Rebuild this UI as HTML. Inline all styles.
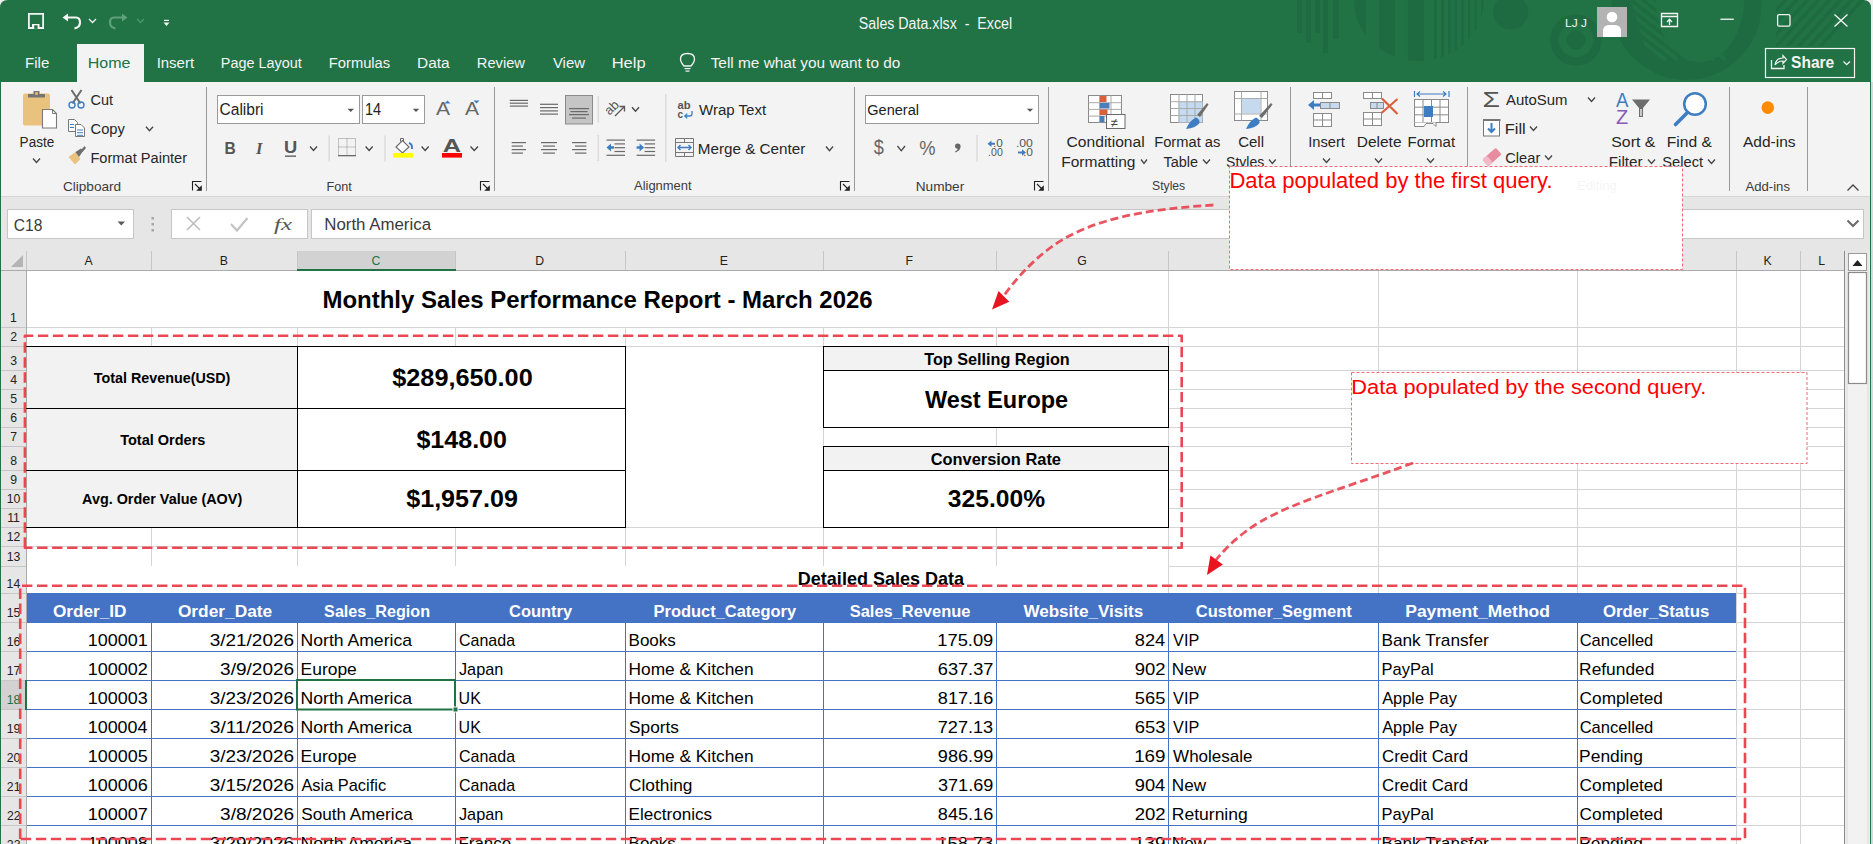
<!DOCTYPE html><html><head><meta charset="utf-8"><title>Sales Data.xlsx - Excel</title><style>html,body{margin:0;padding:0;width:1873px;height:844px;overflow:hidden;background:#dcdcdc;font-family:"Liberation Sans",sans-serif}</style></head><body><svg width="1873" height="844" viewBox="0 0 1873 844" font-family="Liberation Sans, sans-serif" style="display:block">
<rect x="0.00" y="0.00" width="1873.00" height="844.00" fill="#eeeeee" />
<rect x="1871.00" y="82.00" width="2.00" height="762.00" fill="#d8d8d8" />
<path d="M0 8 Q0 0 8 0 L1863 0 Q1871 0 1871 8 L1871 82 L0 82 Z" fill="#217346"/>
<rect x="0.00" y="82.00" width="1.00" height="762.00" fill="#217346" />
<rect x="1870.00" y="82.00" width="1.00" height="762.00" fill="#217346" />
<g fill="#1f6b41" opacity="0.9">
<rect x="1297.00" y="0.00" width="5.00" height="33.00" fill="#1f6b41" />
<rect x="1306.00" y="0.00" width="5.00" height="42.50" fill="#1f6b41" />
<rect x="1315.00" y="0.00" width="5.00" height="33.00" fill="#1f6b41" />
<rect x="1323.00" y="0.00" width="5.00" height="53.00" fill="#1f6b41" />
<rect x="1333.00" y="0.00" width="5.50" height="39.00" fill="#1f6b41" />
<clipPath id="hd"><path d="M1354 0 A65 61 0 0 0 1484 0 Z"/></clipPath>
<g clip-path="url(#hd)">
<rect x="1350.00" y="0.00" width="16.00" height="70.00" fill="#1f6b41" />
<rect x="1379.00" y="0.00" width="16.00" height="70.00" fill="#1f6b41" />
<rect x="1407.70" y="0.00" width="16.30" height="70.00" fill="#1f6b41" />
<rect x="1434.00" y="0.00" width="3.00" height="70.00" fill="#1f6b41" />
<rect x="1441.00" y="0.00" width="3.00" height="70.00" fill="#1f6b41" />
<rect x="1448.00" y="0.00" width="2.50" height="70.00" fill="#1f6b41" />
<rect x="1454.60" y="0.00" width="2.60" height="70.00" fill="#1f6b41" />
<rect x="1461.00" y="0.00" width="2.60" height="70.00" fill="#1f6b41" />
<rect x="1468.00" y="0.00" width="2.40" height="70.00" fill="#1f6b41" />
<rect x="1474.40" y="0.00" width="2.60" height="70.00" fill="#1f6b41" />
<rect x="1481.00" y="0.00" width="3.00" height="70.00" fill="#1f6b41" />
</g>
<circle cx="1510.7" cy="12" r="17.6" fill="#1f6b41"/>
<circle cx="1576" cy="40" r="21.5" fill="none" stroke="#1f6b41" stroke-width="8.5"/>
<circle cx="1576" cy="40" r="9.8" fill="#1f6b41"/>
<clipPath id="br"><circle cx="1686.5" cy="5" r="75"/></clipPath>
<circle cx="1686.5" cy="5" r="75" fill="#1f6b41"/>
<g clip-path="url(#br)">
<clipPath id="br2"><path d="M1629 -5 L1652 70 L1760 70 L1760 -5 Z"/></clipPath>
<g stroke="#217346" stroke-width="4" clip-path="url(#br2)">
<line x1="1576" y1="-10" x2="1666" y2="60"/>
<line x1="1588" y1="-10" x2="1678" y2="60"/>
<line x1="1600" y1="-10" x2="1690" y2="60"/>
<line x1="1612" y1="-10" x2="1702" y2="60"/>
<line x1="1624" y1="-10" x2="1714" y2="60"/>
<line x1="1636" y1="-10" x2="1726" y2="60"/>
</g>
<ellipse cx="1700" cy="0" rx="44" ry="62" fill="#217346"/>
</g>
<clipPath id="tr"><path d="M1776 0 L1871 0 L1871 46 L1776 46 Z"/></clipPath>
<g clip-path="url(#tr)" stroke="#1f6b41" stroke-width="3.5">
<line x1="1790" y1="-5" x2="1740" y2="50"/>
<line x1="1801" y1="-5" x2="1751" y2="50"/>
<line x1="1812" y1="-5" x2="1762" y2="50"/>
<line x1="1823" y1="-5" x2="1773" y2="50"/>
<line x1="1834" y1="-5" x2="1784" y2="50"/>
<line x1="1845" y1="-5" x2="1795" y2="50"/>
<line x1="1856" y1="-5" x2="1806" y2="50"/>
<line x1="1867" y1="-5" x2="1817" y2="50"/>
</g>
</g>
<g fill="none" stroke="#f4f4f4" stroke-width="1.8">
<path d="M28.9 13.9 H43.1 V28 H28.9 Z"/>
</g>
<rect x="32.00" y="24.00" width="7.50" height="4.80" fill="#f4f4f4" />
<rect x="34.20" y="25.30" width="3.40" height="3.50" fill="#217346" />
<path d="M67 17.5 L76 17.5 Q80 17.5 80 22.5 Q80 27.5 74.5 28.3" stroke="#f4f4f4" stroke-width="2.2" fill="none"/>
<path d="M62.5 17.5 L68 13.5 L68 21.5 Z" fill="#f4f4f4"/>
<path d="M89 19 L92.5 22.5 L96 19" stroke="#f4f4f4" stroke-width="1.3" fill="none"/>
<path d="M123 17.5 L114 17.5 Q110 17.5 110 22.5 Q110 27.5 115.5 28.3" stroke="#5fa07a" stroke-width="2.2" fill="none"/>
<path d="M127.5 17.5 L122 13.5 L122 21.5 Z" fill="#5fa07a"/>
<path d="M137 19 L140.5 22.5 L144 19" stroke="#4f9670" stroke-width="1.3" fill="none"/>
<rect x="164.00" y="19.80" width="5.00" height="1.20" fill="#f4f4f4" />
<path d="M163.5 22.5 L169.5 22.5 L166.5 26 Z" fill="#f4f4f4"/>
<text x="858.86" y="29.00" font-size="15.80" font-weight="normal" fill="#f4f4f4" textLength="153.18" lengthAdjust="spacingAndGlyphs" xml:space="preserve">Sales Data.xlsx  -  Excel</text>
<text x="1565.05" y="26.70" font-size="11.59" font-weight="normal" fill="#f4f4f4" textLength="21.83" lengthAdjust="spacingAndGlyphs" >LJ J</text>
<rect x="1597.00" y="7.00" width="30.00" height="30.00" fill="#b3b3b3" />
<circle cx="1612" cy="17" r="5.3" fill="#fff"/>
<path d="M1603 37 L1603 31 Q1603 25 1609 25 L1615 25 Q1621 25 1621 31 L1621 37 Z" fill="#fff"/>
<path d="M1661.5 13.5 H1677.5 V26.5 H1661.5 Z M1661.5 16.5 H1677.5" stroke="#f4f4f4" stroke-width="1.3" fill="none"/>
<path d="M1669.5 25 V19.5 M1667 22 L1669.5 19.3 L1672 22" stroke="#f4f4f4" stroke-width="1.3" fill="none"/>
<rect x="1720.40" y="18.60" width="13.40" height="1.30" fill="#f4f4f4" />
<rect x="1777.6" y="14.6" width="12.4" height="11.6" rx="1.5" stroke="#f4f4f4" stroke-width="1.3" fill="none"/>
<path d="M1834.5 14.5 L1847.5 26.5 M1847.5 14.5 L1834.5 26.5" stroke="#f4f4f4" stroke-width="1.4" fill="none"/>
<rect x="1765.5" y="48.5" width="89" height="29" stroke="#f4f4f4" stroke-width="1.2" fill="none"/>
<path d="M1771.5 60 V68.5 H1784 V65" stroke="#f4f4f4" stroke-width="1.3" fill="none"/>
<path d="M1775 65 Q1776 58 1783 58 V55.5 L1786.5 59.5 L1783 63.5 V61 Q1778 61 1775 65 Z" stroke="#f4f4f4" stroke-width="1.2" fill="none"/>
<text x="1791.03" y="68.40" font-size="16.23" font-weight="bold" fill="#f4f4f4" textLength="43.20" lengthAdjust="spacingAndGlyphs" >Share</text>
<path d="M1843.5 61.5 L1846.7 64.7 L1849.9 61.5" stroke="#f4f4f4" stroke-width="1.3" fill="none"/>
<rect x="77.00" y="44.00" width="67.00" height="38.00" fill="#f3f3f3" />
<text x="25.10" y="68.00" font-size="14.93" font-weight="normal" fill="#f4f4f4" textLength="24.20" lengthAdjust="spacingAndGlyphs" >File</text>
<text x="87.72" y="68.00" font-size="14.93" font-weight="normal" fill="#217346" textLength="42.74" lengthAdjust="spacingAndGlyphs" >Home</text>
<text x="156.65" y="68.00" font-size="14.93" font-weight="normal" fill="#f4f4f4" textLength="37.44" lengthAdjust="spacingAndGlyphs" >Insert</text>
<text x="220.85" y="68.00" font-size="14.93" font-weight="normal" fill="#f4f4f4" textLength="80.84" lengthAdjust="spacingAndGlyphs" >Page Layout</text>
<text x="328.82" y="68.00" font-size="14.93" font-weight="normal" fill="#f4f4f4" textLength="61.36" lengthAdjust="spacingAndGlyphs" >Formulas</text>
<text x="417.07" y="68.00" font-size="14.93" font-weight="normal" fill="#f4f4f4" textLength="32.57" lengthAdjust="spacingAndGlyphs" >Data</text>
<text x="476.82" y="68.00" font-size="14.93" font-weight="normal" fill="#f4f4f4" textLength="48.16" lengthAdjust="spacingAndGlyphs" >Review</text>
<text x="552.93" y="68.00" font-size="14.93" font-weight="normal" fill="#f4f4f4" textLength="32.07" lengthAdjust="spacingAndGlyphs" >View</text>
<text x="611.68" y="68.00" font-size="14.93" font-weight="normal" fill="#f4f4f4" textLength="34.01" lengthAdjust="spacingAndGlyphs" >Help</text>
<text x="710.69" y="68.00" font-size="14.93" font-weight="normal" fill="#f4f4f4" textLength="189.62" lengthAdjust="spacingAndGlyphs" >Tell me what you want to do</text>
<path d="M684 66 Q680.5 62 680.5 59 Q680.5 53.5 687.5 53.5 Q694.5 53.5 694.5 59 Q694.5 62 691 66 Z" stroke="#f4f4f4" stroke-width="1.3" fill="none"/>
<rect x="684.50" y="68.00" width="6.00" height="1.20" fill="#f4f4f4" />
<rect x="685.50" y="70.50" width="4.00" height="1.20" fill="#f4f4f4" />
<rect x="1.00" y="197.00" width="1869.00" height="54.00" fill="#e6e6e6" />
<rect x="1.00" y="196.00" width="1869.00" height="1.00" fill="#d5d5d5" />
<rect x="7.50" y="209.50" width="126.00" height="29.00" fill="#ffffff" stroke="#c6c6c6" stroke-width="1"/>
<text x="13.72" y="230.50" font-size="15.65" font-weight="normal" fill="#3a3a3a" textLength="28.60" lengthAdjust="spacingAndGlyphs" >C18</text>
<path d="M117.5 221.5 L125 221.5 L121.25 225.5 Z" fill="#5a5a5a"/>
<rect x="151.50" y="217.00" width="2.50" height="2.50" fill="#a6a6a6" />
<rect x="151.50" y="223.00" width="2.50" height="2.50" fill="#a6a6a6" />
<rect x="151.50" y="229.00" width="2.50" height="2.50" fill="#a6a6a6" />
<rect x="171.50" y="209.50" width="136.00" height="29.00" fill="#ffffff" stroke="#c6c6c6" stroke-width="1"/>
<path d="M187 217 L200 230 M200 217 L187 230" stroke="#bdbdbd" stroke-width="1.6" fill="none"/>
<path d="M231 224 L237 230.5 L247.5 218" stroke="#c4c4c4" stroke-width="2.2" fill="none"/>
<text x="274" y="230" font-family="Liberation Serif" font-style="italic" font-size="17" fill="#555" textLength="18" lengthAdjust="spacingAndGlyphs">fx</text>
<rect x="311.50" y="209.50" width="1552.00" height="29.00" fill="#ffffff" stroke="#c6c6c6" stroke-width="1"/>
<text x="324.25" y="230.30" font-size="15.94" font-weight="normal" fill="#3a3a3a" textLength="106.76" lengthAdjust="spacingAndGlyphs" >North America</text>
<path d="M1847.5 220.5 L1853 226 L1858.5 220.5" stroke="#6a6a6a" stroke-width="2" fill="none"/>
<rect x="1.00" y="251.00" width="1843.00" height="19.00" fill="#e6e6e6" />
<rect x="297.00" y="251.00" width="158.00" height="19.00" fill="#d2d2d2" />
<rect x="1.00" y="270.00" width="1843.00" height="1.00" fill="#ababab" />
<rect x="151.00" y="251.00" width="1.00" height="19.00" fill="#c6c6c6" />
<rect x="297.00" y="251.00" width="1.00" height="19.00" fill="#c6c6c6" />
<rect x="455.00" y="251.00" width="1.00" height="19.00" fill="#c6c6c6" />
<rect x="625.00" y="251.00" width="1.00" height="19.00" fill="#c6c6c6" />
<rect x="823.00" y="251.00" width="1.00" height="19.00" fill="#c6c6c6" />
<rect x="996.00" y="251.00" width="1.00" height="19.00" fill="#c6c6c6" />
<rect x="1168.00" y="251.00" width="1.00" height="19.00" fill="#c6c6c6" />
<rect x="1378.00" y="251.00" width="1.00" height="19.00" fill="#c6c6c6" />
<rect x="1577.00" y="251.00" width="1.00" height="19.00" fill="#c6c6c6" />
<rect x="1736.00" y="251.00" width="1.00" height="19.00" fill="#c6c6c6" />
<rect x="1800.00" y="251.00" width="1.00" height="19.00" fill="#c6c6c6" />
<rect x="26.00" y="251.00" width="1.00" height="19.00" fill="#c6c6c6" />
<rect x="297.00" y="269.00" width="159.00" height="2.00" fill="#217346" />
<path d="M11 267 L23 267 L23 255 Z" fill="#b4b4b4"/>
<text x="84.42" y="265.20" font-size="13.33" font-weight="normal" fill="#222" textLength="8.18" lengthAdjust="spacingAndGlyphs" >A</text>
<text x="219.74" y="265.20" font-size="13.33" font-weight="normal" fill="#222" textLength="8.18" lengthAdjust="spacingAndGlyphs" >B</text>
<text x="371.49" y="265.20" font-size="13.33" font-weight="normal" fill="#217346" textLength="8.86" lengthAdjust="spacingAndGlyphs" >C</text>
<text x="535.37" y="265.20" font-size="13.33" font-weight="normal" fill="#222" textLength="8.86" lengthAdjust="spacingAndGlyphs" >D</text>
<text x="719.68" y="265.20" font-size="13.33" font-weight="normal" fill="#222" textLength="8.18" lengthAdjust="spacingAndGlyphs" >E</text>
<text x="905.51" y="265.20" font-size="13.33" font-weight="normal" fill="#222" textLength="7.49" lengthAdjust="spacingAndGlyphs" >F</text>
<text x="1077.37" y="265.20" font-size="13.33" font-weight="normal" fill="#222" textLength="9.54" lengthAdjust="spacingAndGlyphs" >G</text>
<text x="1268.58" y="265.20" font-size="13.33" font-weight="normal" fill="#222" textLength="8.86" lengthAdjust="spacingAndGlyphs" >H</text>
<text x="1475.81" y="265.20" font-size="13.33" font-weight="normal" fill="#222" textLength="3.41" lengthAdjust="spacingAndGlyphs" >I</text>
<text x="1653.80" y="265.20" font-size="13.33" font-weight="normal" fill="#222" textLength="6.13" lengthAdjust="spacingAndGlyphs" >J</text>
<text x="1763.49" y="265.20" font-size="13.33" font-weight="normal" fill="#222" textLength="8.18" lengthAdjust="spacingAndGlyphs" >K</text>
<text x="1818.29" y="265.20" font-size="13.33" font-weight="normal" fill="#222" textLength="6.82" lengthAdjust="spacingAndGlyphs" >L</text>
<rect x="1.00" y="271.00" width="25.00" height="573.00" fill="#e6e6e6" />
<rect x="26.00" y="270.00" width="1.00" height="574.00" fill="#ababab" />
<rect x="1.00" y="327.00" width="25.00" height="1.00" fill="#c6c6c6" />
<rect x="1.00" y="346.00" width="25.00" height="1.00" fill="#c6c6c6" />
<rect x="1.00" y="370.00" width="25.00" height="1.00" fill="#c6c6c6" />
<rect x="1.00" y="389.00" width="25.00" height="1.00" fill="#c6c6c6" />
<rect x="1.00" y="408.00" width="25.00" height="1.00" fill="#c6c6c6" />
<rect x="1.00" y="427.00" width="25.00" height="1.00" fill="#c6c6c6" />
<rect x="1.00" y="446.00" width="25.00" height="1.00" fill="#c6c6c6" />
<rect x="1.00" y="470.00" width="25.00" height="1.00" fill="#c6c6c6" />
<rect x="1.00" y="489.00" width="25.00" height="1.00" fill="#c6c6c6" />
<rect x="1.00" y="508.00" width="25.00" height="1.00" fill="#c6c6c6" />
<rect x="1.00" y="527.00" width="25.00" height="1.00" fill="#c6c6c6" />
<rect x="1.00" y="546.00" width="25.00" height="1.00" fill="#c6c6c6" />
<rect x="1.00" y="566.00" width="25.00" height="1.00" fill="#c6c6c6" />
<rect x="1.00" y="593.00" width="25.00" height="1.00" fill="#c6c6c6" />
<rect x="1.00" y="622.00" width="25.00" height="1.00" fill="#c6c6c6" />
<rect x="1.00" y="651.00" width="25.00" height="1.00" fill="#c6c6c6" />
<rect x="1.00" y="680.00" width="25.00" height="1.00" fill="#c6c6c6" />
<rect x="1.00" y="681.00" width="25.00" height="28.00" fill="#d2d2d2" />
<rect x="1.00" y="709.00" width="25.00" height="1.00" fill="#c6c6c6" />
<rect x="1.00" y="738.00" width="25.00" height="1.00" fill="#c6c6c6" />
<rect x="1.00" y="767.00" width="25.00" height="1.00" fill="#c6c6c6" />
<rect x="1.00" y="796.00" width="25.00" height="1.00" fill="#c6c6c6" />
<rect x="1.00" y="825.00" width="25.00" height="1.00" fill="#c6c6c6" />
<rect x="1.00" y="854.00" width="25.00" height="1.00" fill="#c6c6c6" />
<rect x="27.00" y="271.00" width="1817.00" height="573.00" fill="#ffffff" />
<rect x="1844.00" y="251.00" width="1.00" height="593.00" fill="#8a8a8a" />
<rect x="1845.00" y="251.00" width="25.00" height="593.00" fill="#e6e6e6" />
<rect x="1848.00" y="271.00" width="19.00" height="573.00" fill="#f2f2f2" />
<rect x="1869.00" y="251.00" width="1.00" height="593.00" fill="#f0eef0" />
<rect x="1845.00" y="251.00" width="1.00" height="593.00" fill="#ececec" />
<rect x="1848.50" y="253.50" width="18.00" height="17.00" fill="#ffffff" stroke="#9a9a9a" stroke-width="1"/>
<path d="M1852.5 266 L1862.5 266 L1857.5 260 Z" fill="#222"/>
<rect x="1848.50" y="272.50" width="18.00" height="111.00" fill="#ffffff" stroke="#8a8a8a" stroke-width="1.2"/>
<rect x="27.00" y="327.00" width="1817.00" height="1.00" fill="#d4d4d4" />
<rect x="27.00" y="346.00" width="1817.00" height="1.00" fill="#d4d4d4" />
<rect x="27.00" y="370.00" width="1817.00" height="1.00" fill="#d4d4d4" />
<rect x="27.00" y="389.00" width="1817.00" height="1.00" fill="#d4d4d4" />
<rect x="27.00" y="408.00" width="1817.00" height="1.00" fill="#d4d4d4" />
<rect x="27.00" y="427.00" width="1817.00" height="1.00" fill="#d4d4d4" />
<rect x="27.00" y="446.00" width="1817.00" height="1.00" fill="#d4d4d4" />
<rect x="27.00" y="470.00" width="1817.00" height="1.00" fill="#d4d4d4" />
<rect x="27.00" y="489.00" width="1817.00" height="1.00" fill="#d4d4d4" />
<rect x="27.00" y="508.00" width="1817.00" height="1.00" fill="#d4d4d4" />
<rect x="27.00" y="527.00" width="1817.00" height="1.00" fill="#d4d4d4" />
<rect x="27.00" y="546.00" width="1817.00" height="1.00" fill="#d4d4d4" />
<rect x="27.00" y="566.00" width="1817.00" height="1.00" fill="#d4d4d4" />
<rect x="27.00" y="593.00" width="1817.00" height="1.00" fill="#d4d4d4" />
<rect x="27.00" y="622.00" width="1817.00" height="1.00" fill="#d4d4d4" />
<rect x="27.00" y="651.00" width="1817.00" height="1.00" fill="#d4d4d4" />
<rect x="27.00" y="680.00" width="1817.00" height="1.00" fill="#d4d4d4" />
<rect x="27.00" y="709.00" width="1817.00" height="1.00" fill="#d4d4d4" />
<rect x="27.00" y="738.00" width="1817.00" height="1.00" fill="#d4d4d4" />
<rect x="27.00" y="767.00" width="1817.00" height="1.00" fill="#d4d4d4" />
<rect x="27.00" y="796.00" width="1817.00" height="1.00" fill="#d4d4d4" />
<rect x="27.00" y="825.00" width="1817.00" height="1.00" fill="#d4d4d4" />
<rect x="27.00" y="854.00" width="1817.00" height="1.00" fill="#d4d4d4" />
<rect x="151.00" y="271.00" width="1.00" height="573.00" fill="#d4d4d4" />
<rect x="297.00" y="271.00" width="1.00" height="573.00" fill="#d4d4d4" />
<rect x="455.00" y="271.00" width="1.00" height="573.00" fill="#d4d4d4" />
<rect x="625.00" y="271.00" width="1.00" height="573.00" fill="#d4d4d4" />
<rect x="823.00" y="271.00" width="1.00" height="573.00" fill="#d4d4d4" />
<rect x="996.00" y="271.00" width="1.00" height="573.00" fill="#d4d4d4" />
<rect x="1168.00" y="271.00" width="1.00" height="573.00" fill="#d4d4d4" />
<rect x="1378.00" y="271.00" width="1.00" height="573.00" fill="#d4d4d4" />
<rect x="1577.00" y="271.00" width="1.00" height="573.00" fill="#d4d4d4" />
<rect x="1736.00" y="271.00" width="1.00" height="573.00" fill="#d4d4d4" />
<rect x="1800.00" y="271.00" width="1.00" height="573.00" fill="#d4d4d4" />
<rect x="27.00" y="271.00" width="1141.00" height="56.00" fill="#ffffff" />
<text x="322.44" y="307.80" font-size="24.64" font-weight="bold" fill="#000" textLength="550.25" lengthAdjust="spacingAndGlyphs" >Monthly Sales Performance Report - March 2026</text>
<text x="10.11" y="322.40" font-size="13.33" font-weight="normal" fill="#222" textLength="6.82" lengthAdjust="spacingAndGlyphs" >1</text>
<text x="10.30" y="341.40" font-size="13.33" font-weight="normal" fill="#222" textLength="6.82" lengthAdjust="spacingAndGlyphs" >2</text>
<text x="10.30" y="365.40" font-size="13.33" font-weight="normal" fill="#222" textLength="6.82" lengthAdjust="spacingAndGlyphs" >3</text>
<text x="10.36" y="384.40" font-size="13.33" font-weight="normal" fill="#222" textLength="6.82" lengthAdjust="spacingAndGlyphs" >4</text>
<text x="10.30" y="403.40" font-size="13.33" font-weight="normal" fill="#222" textLength="6.82" lengthAdjust="spacingAndGlyphs" >5</text>
<text x="10.23" y="422.40" font-size="13.33" font-weight="normal" fill="#222" textLength="6.82" lengthAdjust="spacingAndGlyphs" >6</text>
<text x="10.30" y="441.40" font-size="13.33" font-weight="normal" fill="#222" textLength="6.82" lengthAdjust="spacingAndGlyphs" >7</text>
<text x="10.27" y="465.40" font-size="13.33" font-weight="normal" fill="#222" textLength="6.82" lengthAdjust="spacingAndGlyphs" >8</text>
<text x="10.30" y="484.40" font-size="13.33" font-weight="normal" fill="#222" textLength="6.82" lengthAdjust="spacingAndGlyphs" >9</text>
<text x="6.65" y="503.40" font-size="13.33" font-weight="normal" fill="#222" textLength="13.64" lengthAdjust="spacingAndGlyphs" >10</text>
<text x="7.17" y="522.40" font-size="13.33" font-weight="normal" fill="#222" textLength="12.73" lengthAdjust="spacingAndGlyphs" >11</text>
<text x="6.74" y="541.40" font-size="13.33" font-weight="normal" fill="#222" textLength="13.64" lengthAdjust="spacingAndGlyphs" >12</text>
<text x="6.68" y="561.40" font-size="13.33" font-weight="normal" fill="#222" textLength="13.64" lengthAdjust="spacingAndGlyphs" >13</text>
<text x="6.62" y="588.40" font-size="13.33" font-weight="normal" fill="#222" textLength="13.64" lengthAdjust="spacingAndGlyphs" >14</text>
<text x="6.68" y="617.40" font-size="13.33" font-weight="normal" fill="#222" textLength="13.64" lengthAdjust="spacingAndGlyphs" >15</text>
<text x="6.68" y="646.40" font-size="13.33" font-weight="normal" fill="#222" textLength="13.64" lengthAdjust="spacingAndGlyphs" >16</text>
<text x="6.74" y="675.40" font-size="13.33" font-weight="normal" fill="#222" textLength="13.64" lengthAdjust="spacingAndGlyphs" >17</text>
<text x="6.68" y="704.40" font-size="13.33" font-weight="normal" fill="#217346" textLength="13.64" lengthAdjust="spacingAndGlyphs" >18</text>
<text x="6.71" y="733.40" font-size="13.33" font-weight="normal" fill="#222" textLength="13.64" lengthAdjust="spacingAndGlyphs" >19</text>
<text x="6.80" y="762.40" font-size="13.33" font-weight="normal" fill="#222" textLength="13.64" lengthAdjust="spacingAndGlyphs" >20</text>
<text x="6.86" y="791.40" font-size="13.33" font-weight="normal" fill="#222" textLength="13.64" lengthAdjust="spacingAndGlyphs" >21</text>
<text x="6.89" y="820.40" font-size="13.33" font-weight="normal" fill="#222" textLength="13.64" lengthAdjust="spacingAndGlyphs" >22</text>
<text x="6.83" y="849.40" font-size="13.33" font-weight="normal" fill="#222" textLength="13.64" lengthAdjust="spacingAndGlyphs" >23</text>
<rect x="27.00" y="346.00" width="270.00" height="181.00" fill="#f2f2f2" />
<rect x="298.00" y="347.00" width="327.00" height="180.00" fill="#ffffff" />
<rect x="26.00" y="346.00" width="600.00" height="1.00" fill="#000" />
<rect x="26.00" y="408.00" width="600.00" height="1.00" fill="#000" />
<rect x="26.00" y="470.00" width="600.00" height="1.00" fill="#000" />
<rect x="26.00" y="527.00" width="600.00" height="1.00" fill="#000" />
<rect x="297.00" y="346.00" width="1.00" height="182.00" fill="#000" />
<rect x="625.00" y="346.00" width="1.00" height="182.00" fill="#000" />
<text x="93.86" y="382.90" font-size="14.78" font-weight="bold" fill="#000" textLength="136.54" lengthAdjust="spacingAndGlyphs" >Total Revenue(USD)</text>
<text x="120.15" y="444.90" font-size="14.64" font-weight="bold" fill="#000" textLength="85.25" lengthAdjust="spacingAndGlyphs" >Total Orders</text>
<text x="82.04" y="503.90" font-size="14.78" font-weight="bold" fill="#000" textLength="160.14" lengthAdjust="spacingAndGlyphs" >Avg. Order Value (AOV)</text>
<text x="392.22" y="386.20" font-size="23.91" font-weight="bold" fill="#000" textLength="140.52" lengthAdjust="spacingAndGlyphs" >$289,650.00</text>
<text x="416.42" y="447.80" font-size="23.91" font-weight="bold" fill="#000" textLength="90.57" lengthAdjust="spacingAndGlyphs" >$148.00</text>
<text x="406.22" y="507.00" font-size="23.91" font-weight="bold" fill="#000" textLength="111.63" lengthAdjust="spacingAndGlyphs" >$1,957.09</text>
<rect x="824.00" y="346.00" width="344.00" height="81.00" fill="#ffffff" />
<rect x="824.00" y="346.00" width="344.00" height="24.00" fill="#f2f2f2" />
<rect x="823.00" y="346.00" width="346.00" height="1.00" fill="#000" />
<rect x="823.00" y="370.00" width="346.00" height="1.00" fill="#000" />
<rect x="823.00" y="427.00" width="346.00" height="1.00" fill="#000" />
<rect x="823.00" y="346.00" width="1.00" height="82.00" fill="#000" />
<rect x="1168.00" y="346.00" width="1.00" height="82.00" fill="#000" />
<rect x="824.00" y="446.00" width="344.00" height="81.00" fill="#ffffff" />
<rect x="824.00" y="446.00" width="344.00" height="24.00" fill="#f2f2f2" />
<rect x="823.00" y="446.00" width="346.00" height="1.00" fill="#000" />
<rect x="823.00" y="470.00" width="346.00" height="1.00" fill="#000" />
<rect x="823.00" y="527.00" width="346.00" height="1.00" fill="#000" />
<rect x="823.00" y="446.00" width="1.00" height="82.00" fill="#000" />
<rect x="1168.00" y="446.00" width="1.00" height="82.00" fill="#000" />
<text x="924.24" y="364.80" font-size="17.25" font-weight="bold" fill="#000" textLength="145.45" lengthAdjust="spacingAndGlyphs" >Top Selling Region</text>
<text x="924.90" y="407.60" font-size="24.06" font-weight="bold" fill="#000" textLength="143.30" lengthAdjust="spacingAndGlyphs" >West Europe</text>
<text x="930.64" y="464.80" font-size="17.25" font-weight="bold" fill="#000" textLength="130.35" lengthAdjust="spacingAndGlyphs" >Conversion Rate</text>
<text x="947.88" y="507.00" font-size="24.06" font-weight="bold" fill="#000" textLength="97.18" lengthAdjust="spacingAndGlyphs" >325.00%</text>
<rect x="626.00" y="347.00" width="197.00" height="180.00" fill="#ffffff" />
<rect x="824.00" y="428.00" width="344.00" height="18.00" fill="#ffffff" />
<rect x="996.00" y="428.00" width="1.00" height="18.00" fill="#d4d4d4" />
<rect x="27.00" y="566.00" width="1141.00" height="27.00" fill="#ffffff" />
<text x="797.83" y="585.40" font-size="17.97" font-weight="bold" fill="#000" textLength="166.22" lengthAdjust="spacingAndGlyphs" >Detailed Sales Data</text>
<rect x="27.00" y="593.00" width="1709.00" height="30.00" fill="#4472c4" />
<text x="52.91" y="616.80" font-size="15.94" font-weight="bold" fill="#ffffff" textLength="73.55" lengthAdjust="spacingAndGlyphs" >Order_ID</text>
<text x="177.91" y="616.80" font-size="15.94" font-weight="bold" fill="#ffffff" textLength="94.23" lengthAdjust="spacingAndGlyphs" >Order_Date</text>
<text x="324.12" y="616.80" font-size="15.94" font-weight="bold" fill="#ffffff" textLength="105.91" lengthAdjust="spacingAndGlyphs" >Sales_Region</text>
<text x="509.04" y="616.80" font-size="15.94" font-weight="bold" fill="#ffffff" textLength="63.09" lengthAdjust="spacingAndGlyphs" >Country</text>
<text x="653.63" y="616.80" font-size="15.94" font-weight="bold" fill="#ffffff" textLength="142.43" lengthAdjust="spacingAndGlyphs" >Product_Category</text>
<text x="849.71" y="616.80" font-size="15.94" font-weight="bold" fill="#ffffff" textLength="120.72" lengthAdjust="spacingAndGlyphs" >Sales_Revenue</text>
<text x="1023.40" y="616.80" font-size="15.94" font-weight="bold" fill="#ffffff" textLength="119.82" lengthAdjust="spacingAndGlyphs" >Website_Visits</text>
<text x="1195.84" y="616.80" font-size="15.94" font-weight="bold" fill="#ffffff" textLength="155.96" lengthAdjust="spacingAndGlyphs" >Customer_Segment</text>
<text x="1405.26" y="616.80" font-size="15.94" font-weight="bold" fill="#ffffff" textLength="144.66" lengthAdjust="spacingAndGlyphs" >Payment_Method</text>
<text x="1602.93" y="616.80" font-size="15.94" font-weight="bold" fill="#ffffff" textLength="106.35" lengthAdjust="spacingAndGlyphs" >Order_Status</text>
<rect x="27.00" y="623.00" width="1709.00" height="28.00" fill="#ffffff" />
<rect x="27.00" y="652.00" width="1709.00" height="28.00" fill="#ffffff" />
<rect x="27.00" y="681.00" width="1709.00" height="28.00" fill="#ffffff" />
<rect x="27.00" y="710.00" width="1709.00" height="28.00" fill="#ffffff" />
<rect x="27.00" y="739.00" width="1709.00" height="28.00" fill="#ffffff" />
<rect x="27.00" y="768.00" width="1709.00" height="28.00" fill="#ffffff" />
<rect x="27.00" y="797.00" width="1709.00" height="28.00" fill="#ffffff" />
<rect x="27.00" y="826.00" width="1709.00" height="28.00" fill="#ffffff" />
<rect x="27.00" y="651.00" width="1709.00" height="1.00" fill="#4472c4" />
<rect x="27.00" y="680.00" width="1709.00" height="1.00" fill="#4472c4" />
<rect x="27.00" y="709.00" width="1709.00" height="1.00" fill="#4472c4" />
<rect x="27.00" y="738.00" width="1709.00" height="1.00" fill="#4472c4" />
<rect x="27.00" y="767.00" width="1709.00" height="1.00" fill="#4472c4" />
<rect x="27.00" y="796.00" width="1709.00" height="1.00" fill="#4472c4" />
<rect x="27.00" y="825.00" width="1709.00" height="1.00" fill="#4472c4" />
<rect x="27.00" y="854.00" width="1709.00" height="1.00" fill="#4472c4" />
<rect x="151.00" y="623.00" width="1.00" height="221.00" fill="#4472c4" />
<rect x="297.00" y="623.00" width="1.00" height="221.00" fill="#4472c4" />
<rect x="455.00" y="623.00" width="1.00" height="221.00" fill="#4472c4" />
<rect x="625.00" y="623.00" width="1.00" height="221.00" fill="#4472c4" />
<rect x="823.00" y="623.00" width="1.00" height="221.00" fill="#4472c4" />
<rect x="996.00" y="623.00" width="1.00" height="221.00" fill="#4472c4" />
<rect x="1168.00" y="623.00" width="1.00" height="221.00" fill="#4472c4" />
<rect x="1378.00" y="623.00" width="1.00" height="221.00" fill="#4472c4" />
<rect x="1577.00" y="623.00" width="1.00" height="221.00" fill="#4472c4" />
<text x="87.75" y="645.80" font-size="16.81" font-weight="normal" fill="#000" textLength="59.99" lengthAdjust="spacingAndGlyphs" >100001</text>
<text x="209.74" y="645.80" font-size="16.81" font-weight="normal" fill="#000" textLength="84.29" lengthAdjust="spacingAndGlyphs" >3/21/2026</text>
<text x="937.33" y="645.80" font-size="16.81" font-weight="normal" fill="#000" textLength="55.97" lengthAdjust="spacingAndGlyphs" >175.09</text>
<text x="1134.78" y="645.80" font-size="16.81" font-weight="normal" fill="#000" textLength="30.43" lengthAdjust="spacingAndGlyphs" >824</text>
<text x="300.59" y="645.80" font-size="16.81" font-weight="normal" fill="#000" textLength="111.42" lengthAdjust="spacingAndGlyphs" >North America</text>
<text x="459.00" y="645.80" font-size="16.81" font-weight="normal" fill="#000" textLength="56.05" lengthAdjust="spacingAndGlyphs" >Canada</text>
<text x="628.54" y="645.80" font-size="16.81" font-weight="normal" fill="#000" textLength="47.35" lengthAdjust="spacingAndGlyphs" >Books</text>
<text x="1173.12" y="645.80" font-size="16.81" font-weight="normal" fill="#000" textLength="26.12" lengthAdjust="spacingAndGlyphs" >VIP</text>
<text x="1381.42" y="645.80" font-size="16.81" font-weight="normal" fill="#000" textLength="107.33" lengthAdjust="spacingAndGlyphs" >Bank Transfer</text>
<text x="1579.67" y="645.80" font-size="16.81" font-weight="normal" fill="#000" textLength="73.64" lengthAdjust="spacingAndGlyphs" >Cancelled</text>
<text x="87.75" y="674.80" font-size="16.81" font-weight="normal" fill="#000" textLength="60.09" lengthAdjust="spacingAndGlyphs" >100002</text>
<text x="220.14" y="674.80" font-size="16.81" font-weight="normal" fill="#000" textLength="73.97" lengthAdjust="spacingAndGlyphs" >3/9/2026</text>
<text x="937.79" y="674.80" font-size="16.81" font-weight="normal" fill="#000" textLength="55.59" lengthAdjust="spacingAndGlyphs" >637.37</text>
<text x="1134.77" y="674.80" font-size="16.81" font-weight="normal" fill="#000" textLength="30.82" lengthAdjust="spacingAndGlyphs" >902</text>
<text x="300.61" y="674.80" font-size="16.81" font-weight="normal" fill="#000" textLength="56.17" lengthAdjust="spacingAndGlyphs" >Europe</text>
<text x="458.96" y="674.80" font-size="16.81" font-weight="normal" fill="#000" textLength="44.30" lengthAdjust="spacingAndGlyphs" >Japan</text>
<text x="628.52" y="674.80" font-size="16.81" font-weight="normal" fill="#000" textLength="125.02" lengthAdjust="spacingAndGlyphs" >Home &amp; Kitchen</text>
<text x="1171.83" y="674.80" font-size="16.81" font-weight="normal" fill="#000" textLength="34.30" lengthAdjust="spacingAndGlyphs" >New</text>
<text x="1381.48" y="674.80" font-size="16.81" font-weight="normal" fill="#000" textLength="52.25" lengthAdjust="spacingAndGlyphs" >PayPal</text>
<text x="1579.11" y="674.80" font-size="16.81" font-weight="normal" fill="#000" textLength="75.25" lengthAdjust="spacingAndGlyphs" >Refunded</text>
<text x="87.75" y="703.80" font-size="16.81" font-weight="normal" fill="#000" textLength="59.90" lengthAdjust="spacingAndGlyphs" >100003</text>
<text x="209.74" y="703.80" font-size="16.81" font-weight="normal" fill="#000" textLength="84.29" lengthAdjust="spacingAndGlyphs" >3/23/2026</text>
<text x="937.89" y="703.80" font-size="16.81" font-weight="normal" fill="#000" textLength="55.31" lengthAdjust="spacingAndGlyphs" >817.16</text>
<text x="1134.87" y="703.80" font-size="16.81" font-weight="normal" fill="#000" textLength="30.53" lengthAdjust="spacingAndGlyphs" >565</text>
<text x="300.59" y="703.80" font-size="16.81" font-weight="normal" fill="#000" textLength="111.42" lengthAdjust="spacingAndGlyphs" >North America</text>
<text x="458.60" y="703.80" font-size="16.81" font-weight="normal" fill="#000" textLength="22.23" lengthAdjust="spacingAndGlyphs" >UK</text>
<text x="628.52" y="703.80" font-size="16.81" font-weight="normal" fill="#000" textLength="125.02" lengthAdjust="spacingAndGlyphs" >Home &amp; Kitchen</text>
<text x="1173.12" y="703.80" font-size="16.81" font-weight="normal" fill="#000" textLength="26.12" lengthAdjust="spacingAndGlyphs" >VIP</text>
<text x="1382.20" y="703.80" font-size="16.81" font-weight="normal" fill="#000" textLength="74.68" lengthAdjust="spacingAndGlyphs" >Apple Pay</text>
<text x="1579.64" y="703.80" font-size="16.81" font-weight="normal" fill="#000" textLength="83.30" lengthAdjust="spacingAndGlyphs" >Completed</text>
<text x="87.76" y="732.80" font-size="16.81" font-weight="normal" fill="#000" textLength="59.72" lengthAdjust="spacingAndGlyphs" >100004</text>
<text x="209.73" y="732.80" font-size="16.81" font-weight="normal" fill="#000" textLength="84.33" lengthAdjust="spacingAndGlyphs" >3/11/2026</text>
<text x="937.79" y="732.80" font-size="16.81" font-weight="normal" fill="#000" textLength="55.41" lengthAdjust="spacingAndGlyphs" >727.13</text>
<text x="1134.68" y="732.80" font-size="16.81" font-weight="normal" fill="#000" textLength="30.72" lengthAdjust="spacingAndGlyphs" >653</text>
<text x="300.59" y="732.80" font-size="16.81" font-weight="normal" fill="#000" textLength="111.42" lengthAdjust="spacingAndGlyphs" >North America</text>
<text x="458.60" y="732.80" font-size="16.81" font-weight="normal" fill="#000" textLength="22.23" lengthAdjust="spacingAndGlyphs" >UK</text>
<text x="629.12" y="732.80" font-size="16.81" font-weight="normal" fill="#000" textLength="49.88" lengthAdjust="spacingAndGlyphs" >Sports</text>
<text x="1173.12" y="732.80" font-size="16.81" font-weight="normal" fill="#000" textLength="26.12" lengthAdjust="spacingAndGlyphs" >VIP</text>
<text x="1382.20" y="732.80" font-size="16.81" font-weight="normal" fill="#000" textLength="74.68" lengthAdjust="spacingAndGlyphs" >Apple Pay</text>
<text x="1579.67" y="732.80" font-size="16.81" font-weight="normal" fill="#000" textLength="73.64" lengthAdjust="spacingAndGlyphs" >Cancelled</text>
<text x="87.75" y="761.80" font-size="16.81" font-weight="normal" fill="#000" textLength="59.90" lengthAdjust="spacingAndGlyphs" >100005</text>
<text x="209.74" y="761.80" font-size="16.81" font-weight="normal" fill="#000" textLength="84.29" lengthAdjust="spacingAndGlyphs" >3/23/2026</text>
<text x="937.88" y="761.80" font-size="16.81" font-weight="normal" fill="#000" textLength="55.41" lengthAdjust="spacingAndGlyphs" >986.99</text>
<text x="1134.19" y="761.80" font-size="16.81" font-weight="normal" fill="#000" textLength="31.32" lengthAdjust="spacingAndGlyphs" >169</text>
<text x="300.61" y="761.80" font-size="16.81" font-weight="normal" fill="#000" textLength="56.17" lengthAdjust="spacingAndGlyphs" >Europe</text>
<text x="459.00" y="761.80" font-size="16.81" font-weight="normal" fill="#000" textLength="56.05" lengthAdjust="spacingAndGlyphs" >Canada</text>
<text x="628.52" y="761.80" font-size="16.81" font-weight="normal" fill="#000" textLength="125.02" lengthAdjust="spacingAndGlyphs" >Home &amp; Kitchen</text>
<text x="1173.11" y="761.80" font-size="16.81" font-weight="normal" fill="#000" textLength="79.43" lengthAdjust="spacingAndGlyphs" >Wholesale</text>
<text x="1381.96" y="761.80" font-size="16.81" font-weight="normal" fill="#000" textLength="86.29" lengthAdjust="spacingAndGlyphs" >Credit Card</text>
<text x="1579.11" y="761.80" font-size="16.81" font-weight="normal" fill="#000" textLength="63.82" lengthAdjust="spacingAndGlyphs" >Pending</text>
<text x="87.75" y="790.80" font-size="16.81" font-weight="normal" fill="#000" textLength="59.90" lengthAdjust="spacingAndGlyphs" >100006</text>
<text x="209.74" y="790.80" font-size="16.81" font-weight="normal" fill="#000" textLength="84.29" lengthAdjust="spacingAndGlyphs" >3/15/2026</text>
<text x="937.98" y="790.80" font-size="16.81" font-weight="normal" fill="#000" textLength="55.31" lengthAdjust="spacingAndGlyphs" >371.69</text>
<text x="1134.78" y="790.80" font-size="16.81" font-weight="normal" fill="#000" textLength="30.43" lengthAdjust="spacingAndGlyphs" >904</text>
<text x="301.40" y="790.80" font-size="16.81" font-weight="normal" fill="#000" textLength="84.69" lengthAdjust="spacingAndGlyphs" >Asia Pacific</text>
<text x="459.00" y="790.80" font-size="16.81" font-weight="normal" fill="#000" textLength="56.05" lengthAdjust="spacingAndGlyphs" >Canada</text>
<text x="629.04" y="790.80" font-size="16.81" font-weight="normal" fill="#000" textLength="63.47" lengthAdjust="spacingAndGlyphs" >Clothing</text>
<text x="1171.83" y="790.80" font-size="16.81" font-weight="normal" fill="#000" textLength="34.30" lengthAdjust="spacingAndGlyphs" >New</text>
<text x="1381.96" y="790.80" font-size="16.81" font-weight="normal" fill="#000" textLength="86.29" lengthAdjust="spacingAndGlyphs" >Credit Card</text>
<text x="1579.64" y="790.80" font-size="16.81" font-weight="normal" fill="#000" textLength="83.30" lengthAdjust="spacingAndGlyphs" >Completed</text>
<text x="87.75" y="819.80" font-size="16.81" font-weight="normal" fill="#000" textLength="60.09" lengthAdjust="spacingAndGlyphs" >100007</text>
<text x="220.14" y="819.80" font-size="16.81" font-weight="normal" fill="#000" textLength="73.97" lengthAdjust="spacingAndGlyphs" >3/8/2026</text>
<text x="937.89" y="819.80" font-size="16.81" font-weight="normal" fill="#000" textLength="55.31" lengthAdjust="spacingAndGlyphs" >845.16</text>
<text x="1134.67" y="819.80" font-size="16.81" font-weight="normal" fill="#000" textLength="30.92" lengthAdjust="spacingAndGlyphs" >202</text>
<text x="301.23" y="819.80" font-size="16.81" font-weight="normal" fill="#000" textLength="111.55" lengthAdjust="spacingAndGlyphs" >South America</text>
<text x="458.96" y="819.80" font-size="16.81" font-weight="normal" fill="#000" textLength="44.30" lengthAdjust="spacingAndGlyphs" >Japan</text>
<text x="628.53" y="819.80" font-size="16.81" font-weight="normal" fill="#000" textLength="83.48" lengthAdjust="spacingAndGlyphs" >Electronics</text>
<text x="1171.80" y="819.80" font-size="16.81" font-weight="normal" fill="#000" textLength="75.96" lengthAdjust="spacingAndGlyphs" >Returning</text>
<text x="1381.48" y="819.80" font-size="16.81" font-weight="normal" fill="#000" textLength="52.25" lengthAdjust="spacingAndGlyphs" >PayPal</text>
<text x="1579.64" y="819.80" font-size="16.81" font-weight="normal" fill="#000" textLength="83.30" lengthAdjust="spacingAndGlyphs" >Completed</text>
<text x="87.75" y="848.80" font-size="16.81" font-weight="normal" fill="#000" textLength="59.90" lengthAdjust="spacingAndGlyphs" >100008</text>
<text x="209.74" y="848.80" font-size="16.81" font-weight="normal" fill="#000" textLength="84.29" lengthAdjust="spacingAndGlyphs" >3/29/2026</text>
<text x="937.33" y="848.80" font-size="16.81" font-weight="normal" fill="#000" textLength="55.88" lengthAdjust="spacingAndGlyphs" >158.73</text>
<text x="1134.19" y="848.80" font-size="16.81" font-weight="normal" fill="#000" textLength="31.32" lengthAdjust="spacingAndGlyphs" >139</text>
<text x="300.59" y="848.80" font-size="16.81" font-weight="normal" fill="#000" textLength="111.42" lengthAdjust="spacingAndGlyphs" >North America</text>
<text x="458.44" y="848.80" font-size="16.81" font-weight="normal" fill="#000" textLength="52.76" lengthAdjust="spacingAndGlyphs" >France</text>
<text x="628.54" y="848.80" font-size="16.81" font-weight="normal" fill="#000" textLength="47.35" lengthAdjust="spacingAndGlyphs" >Books</text>
<text x="1171.83" y="848.80" font-size="16.81" font-weight="normal" fill="#000" textLength="34.30" lengthAdjust="spacingAndGlyphs" >New</text>
<text x="1381.42" y="848.80" font-size="16.81" font-weight="normal" fill="#000" textLength="107.33" lengthAdjust="spacingAndGlyphs" >Bank Transfer</text>
<text x="1579.11" y="848.80" font-size="16.81" font-weight="normal" fill="#000" textLength="63.82" lengthAdjust="spacingAndGlyphs" >Pending</text>
<rect x="297" y="680" width="158" height="29.5" fill="none" stroke="#217346" stroke-width="2"/>
<rect x="453.00" y="707.00" width="5.00" height="5.00" fill="#217346" stroke="#ffffff" stroke-width="1"/>
<rect x="25.00" y="680.00" width="2.00" height="30.00" fill="#217346" />
<rect x="1.00" y="82.00" width="1869.00" height="114.00" fill="#f3f3f3" />
<rect x="23" y="93.5" width="27" height="32" rx="2" fill="#e9c27d"/>
<path d="M28 97.5 V94 H33.5 V91 H39.5 V94 H45 V97.5 Z" fill="#757575"/>
<rect x="35.20" y="92.20" width="2.60" height="2.60" fill="#e9c27d" />
<path d="M42.5 109.5 H52.5 L56.5 113.5 V128 H42.5 Z" fill="#fff" stroke="#7a7a7a" stroke-width="1.1"/>
<path d="M52.5 109.5 V113.5 H56.5" fill="none" stroke="#7a7a7a" stroke-width="1"/>
<text x="19.62" y="146.70" font-size="15.07" font-weight="normal" fill="#262626" textLength="34.62" lengthAdjust="spacingAndGlyphs" >Paste</text>
<path d="M33 158.5 L36.5 162.5 L40 158.5" stroke="#444" stroke-width="1.3" fill="none"/>
<path d="M71.5 90 L80.5 103.5 M81.5 90 L72.5 103.5" stroke="#6b6b6b" stroke-width="2" fill="none"/>
<circle cx="72" cy="105" r="3" fill="none" stroke="#3f7dc2" stroke-width="1.4"/>
<circle cx="81" cy="105" r="3" fill="none" stroke="#3f7dc2" stroke-width="1.4"/>
<text x="90.58" y="105.00" font-size="15.51" font-weight="normal" fill="#262626" textLength="22.51" lengthAdjust="spacingAndGlyphs" >Cut</text>
<path d="M68.5 119.5 H74.5 L77.5 122.5 V131.5 H68.5 Z" fill="#fff" stroke="#777" stroke-width="1"/>
<path d="M75.5 124.5 H81 L84.5 128 V136.5 H75.5 Z" fill="#fff" stroke="#777" stroke-width="1"/>
<rect x="70.00" y="124.00" width="4.00" height="1.00" fill="#3f7dc2" />
<rect x="70.00" y="127.00" width="4.00" height="1.00" fill="#3f7dc2" />
<rect x="77.00" y="129.50" width="6.00" height="1.00" fill="#3f7dc2" />
<rect x="77.00" y="132.20" width="6.00" height="1.00" fill="#3f7dc2" />
<rect x="77.00" y="134.80" width="6.00" height="1.00" fill="#3f7dc2" />
<text x="90.56" y="133.70" font-size="15.51" font-weight="normal" fill="#262626" textLength="34.33" lengthAdjust="spacingAndGlyphs" >Copy</text>
<path d="M146 126.8 L149.5 130.8 L153 126.8" stroke="#444" stroke-width="1.3" fill="none"/>
<path d="M68.5 157 L75.5 152 L80.5 159 L75 164.5 Z" fill="#e9c27d"/>
<path d="M75.5 152 L81 148.5 L83 151 L79 157 Z" fill="#6d6d6d"/>
<path d="M81 150 L84.5 146 L86 148 L82.5 152 Z" fill="#6d6d6d"/>
<text x="90.43" y="162.80" font-size="15.51" font-weight="normal" fill="#262626" textLength="96.64" lengthAdjust="spacingAndGlyphs" >Format Painter</text>
<text x="62.92" y="190.80" font-size="13.04" font-weight="normal" fill="#3b3b3b" textLength="58.27" lengthAdjust="spacingAndGlyphs" >Clipboard</text>
<path d="M192.5 190.5 V181.5 H201.5" stroke="#222" stroke-width="1.1" fill="none"/>
<path d="M195 184 L201 190" stroke="#222" stroke-width="1.1" fill="none"/>
<path d="M201.8 185.2 V190.8 H196.2 Z" fill="#222"/>
<rect x="206.00" y="87.00" width="1.00" height="104.00" fill="#9a9a9a" />
<rect x="217.50" y="95.50" width="142.00" height="28.00" fill="#fff" stroke="#9a9a9a" stroke-width="1"/>
<text x="219.52" y="115.00" font-size="15.94" font-weight="normal" fill="#222" textLength="44.05" lengthAdjust="spacingAndGlyphs" >Calibri</text>
<path d="M347.5 108.8 L354 108.8 L350.75 112 Z" fill="#555"/>
<rect x="362.50" y="95.50" width="62.00" height="28.00" fill="#fff" stroke="#9a9a9a" stroke-width="1"/>
<text x="364.91" y="115.00" font-size="15.94" font-weight="normal" fill="#222" textLength="16.16" lengthAdjust="spacingAndGlyphs" >14</text>
<path d="M412.8 108.8 L419.3 108.8 L416 112 Z" fill="#555"/>
<text x="436.00" y="115.00" font-size="18.84" font-weight="normal" fill="#666" textLength="14.04" lengthAdjust="spacingAndGlyphs" >A</text>
<path d="M444.5 103.5 L447.5 100.5 L450.5 103.5 Z" fill="#3f7dc2"/>
<text x="465.00" y="115.00" font-size="18.84" font-weight="normal" fill="#666" textLength="14.04" lengthAdjust="spacingAndGlyphs" >A</text>
<path d="M473.5 100.5 L479.5 100.5 L476.5 103.5 Z" fill="#3f7dc2"/>
<text x="224.49" y="153.70" font-size="16.67" font-weight="bold" fill="#555" textLength="11.25" lengthAdjust="spacingAndGlyphs" >B</text>
<text x="256" y="153.7" font-family="Liberation Serif" font-style="italic" font-weight="bold" font-size="16.5" fill="#555">I</text>
<text x="283.90" y="153.00" font-size="15.94" font-weight="bold" fill="#555" textLength="13.24" lengthAdjust="spacingAndGlyphs" >U</text>
<rect x="285.00" y="155.50" width="11.00" height="1.30" fill="#555" />
<path d="M310 146.5 L313.5 150.5 L317 146.5" stroke="#444" stroke-width="1.3" fill="none"/>
<rect x="328.60" y="135.50" width="1.00" height="26.00" fill="#d0d0d0" />
<path d="M338.5 138.5 H355.5 V155.5 H338.5 Z M347 138.5 V155.5 M338.5 147 H355.5" stroke="#8a8a8a" stroke-width="1" stroke-dasharray="1 1" fill="none"/>
<rect x="338.00" y="155.00" width="18.00" height="1.30" fill="#6a6a6a" />
<path d="M365.6 146.5 L369.15 150.5 L372.7 146.5" stroke="#444" stroke-width="1.3" fill="none"/>
<rect x="384.50" y="135.50" width="1.00" height="26.00" fill="#d0d0d0" />
<path d="M396 147 L402.5 140.5 L409 147 L402.5 153 Z" fill="#fff" stroke="#6a6a6a" stroke-width="1.1"/>
<path d="M400.5 141.5 V138.5 H403.5 V141" fill="none" stroke="#6a6a6a" stroke-width="1"/>
<path d="M409 143 Q412.5 144 412 149" stroke="#3f7dc2" stroke-width="2" fill="none"/>
<rect x="393.00" y="153.00" width="20.00" height="4.60" fill="#ffff00" />
<path d="M421.6 146.5 L425.15 150.5 L428.7 146.5" stroke="#444" stroke-width="1.3" fill="none"/>
<text x="442.87" y="151.50" font-size="18.12" font-weight="bold" fill="#555" textLength="18.32" lengthAdjust="spacingAndGlyphs" >A</text>
<rect x="442.00" y="153.00" width="20.00" height="4.60" fill="#ff0000" />
<path d="M470.5 146.5 L474.25 150.5 L478 146.5" stroke="#444" stroke-width="1.3" fill="none"/>
<text x="326.48" y="190.70" font-size="13.04" font-weight="normal" fill="#3b3b3b" textLength="25.39" lengthAdjust="spacingAndGlyphs" >Font</text>
<path d="M480.5 190.5 V181.5 H489.5" stroke="#222" stroke-width="1.1" fill="none"/>
<path d="M483 184 L489 190" stroke="#222" stroke-width="1.1" fill="none"/>
<path d="M489.8 185.2 V190.8 H484.2 Z" fill="#222"/>
<rect x="494.00" y="87.00" width="1.00" height="104.00" fill="#9a9a9a" />
<rect x="509.80" y="99.80" width="18.20" height="1.20" fill="#6a6a6a" />
<rect x="509.80" y="102.60" width="18.20" height="1.20" fill="#6a6a6a" />
<rect x="509.80" y="105.50" width="18.20" height="1.20" fill="#6a6a6a" />
<rect x="540.00" y="103.70" width="18.00" height="1.20" fill="#6a6a6a" />
<rect x="540.00" y="107.00" width="18.00" height="1.20" fill="#6a6a6a" />
<rect x="540.00" y="110.30" width="18.00" height="1.20" fill="#6a6a6a" />
<rect x="540.00" y="113.50" width="18.00" height="1.20" fill="#6a6a6a" />
<rect x="565.50" y="95.50" width="27.00" height="28.50" fill="#c5c5c5" stroke="#8a8a8a" stroke-width="1"/>
<rect x="569.00" y="108.00" width="20.00" height="1.20" fill="#6a6a6a" />
<rect x="570.50" y="111.00" width="17.00" height="1.20" fill="#6a6a6a" />
<rect x="569.00" y="114.00" width="20.00" height="1.20" fill="#6a6a6a" />
<rect x="572.00" y="117.50" width="14.00" height="1.20" fill="#6a6a6a" />
<rect x="511.70" y="142.00" width="14.30" height="1.20" fill="#6a6a6a" />
<rect x="511.70" y="145.50" width="11.30" height="1.20" fill="#6a6a6a" />
<rect x="511.70" y="149.00" width="14.30" height="1.20" fill="#6a6a6a" />
<rect x="511.70" y="152.50" width="11.30" height="1.20" fill="#6a6a6a" />
<rect x="541.00" y="142.00" width="16.00" height="1.20" fill="#6a6a6a" />
<rect x="543.00" y="145.50" width="12.00" height="1.20" fill="#6a6a6a" />
<rect x="541.00" y="149.00" width="16.00" height="1.20" fill="#6a6a6a" />
<rect x="543.00" y="152.50" width="12.00" height="1.20" fill="#6a6a6a" />
<rect x="572.00" y="142.00" width="14.40" height="1.20" fill="#6a6a6a" />
<rect x="575.00" y="145.50" width="11.40" height="1.20" fill="#6a6a6a" />
<rect x="572.00" y="149.00" width="14.40" height="1.20" fill="#6a6a6a" />
<rect x="575.00" y="152.50" width="11.40" height="1.20" fill="#6a6a6a" />
<rect x="597.70" y="96.00" width="1.00" height="26.50" fill="#d0d0d0" />
<rect x="597.70" y="135.00" width="1.00" height="26.00" fill="#d0d0d0" />
<text x="0" y="0" font-size="13" fill="#5a5a5a" text-anchor="middle" transform="translate(614.7 110.7) rotate(-45)">ab</text>
<path d="M615 116 L624.5 106.5 M619.5 106.5 H624.5 V111.5" stroke="#5a5a5a" stroke-width="1.3" fill="none"/>
<path d="M632 107.2 L635.5 111.2 L639 107.2" stroke="#444" stroke-width="1.3" fill="none"/>
<rect x="606.50" y="139.50" width="18.50" height="1.20" fill="#6a6a6a" />
<rect x="614.50" y="143.30" width="10.50" height="1.20" fill="#6a6a6a" />
<rect x="614.50" y="147.10" width="10.50" height="1.20" fill="#6a6a6a" />
<rect x="614.50" y="150.90" width="10.50" height="1.20" fill="#6a6a6a" />
<rect x="606.50" y="154.70" width="18.50" height="1.20" fill="#6a6a6a" />
<path d="M606.5 147.5 L611.0 143.5 V146.3 H614.0 V148.7 H611.0 V151.5 Z" fill="#3f7dc2"/>
<rect x="636.60" y="139.50" width="18.50" height="1.20" fill="#6a6a6a" />
<rect x="644.60" y="143.30" width="10.50" height="1.20" fill="#6a6a6a" />
<rect x="644.60" y="147.10" width="10.50" height="1.20" fill="#6a6a6a" />
<rect x="644.60" y="150.90" width="10.50" height="1.20" fill="#6a6a6a" />
<rect x="636.60" y="154.70" width="18.50" height="1.20" fill="#6a6a6a" />
<path d="M644.1 147.5 L639.6 143.5 V146.3 H636.6 V148.7 H639.6 V151.5 Z" fill="#3f7dc2"/>
<rect x="665.40" y="94.00" width="1.00" height="68.00" fill="#d0d0d0" />
<text x="677.5" y="109" font-size="10" fill="#555" font-weight="bold" textLength="13" lengthAdjust="spacingAndGlyphs">ab</text>
<text x="677.5" y="117.5" font-size="10" fill="#555" font-weight="bold">c</text>
<path d="M692 111 V114 Q692 116 689.5 116 H685 M687.3 113.6 L684.8 116 L687.3 118.4" stroke="#3f7dc2" stroke-width="1.3" fill="none"/>
<text x="699.02" y="115.00" font-size="15.51" font-weight="normal" fill="#262626" textLength="67.12" lengthAdjust="spacingAndGlyphs" >Wrap Text</text>
<path d="M675.5 138.5 H693.5 V156.5 H675.5 Z M675.5 142.5 H693.5 M675.5 152.5 H693.5 M684.5 138.5 V142.5 M684.5 152.5 V156.5" stroke="#777" stroke-width="1" fill="none"/>
<path d="M678 147.5 H691 M680.5 145 L678 147.5 L680.5 150 M688.5 145 L691 147.5 L688.5 150" stroke="#3f7dc2" stroke-width="1.4" fill="none"/>
<text x="697.78" y="153.90" font-size="15.51" font-weight="normal" fill="#262626" textLength="107.51" lengthAdjust="spacingAndGlyphs" >Merge &amp; Center</text>
<path d="M826 146.5 L829.5 150.7 L833 146.5" stroke="#444" stroke-width="1.3" fill="none"/>
<text x="634.00" y="190.30" font-size="13.04" font-weight="normal" fill="#3b3b3b" textLength="57.59" lengthAdjust="spacingAndGlyphs" >Alignment</text>
<path d="M840.5 190.5 V181.5 H849.5" stroke="#222" stroke-width="1.1" fill="none"/>
<path d="M843 184 L849 190" stroke="#222" stroke-width="1.1" fill="none"/>
<path d="M849.8 185.2 V190.8 H844.2 Z" fill="#222"/>
<rect x="854.00" y="87.00" width="1.00" height="104.00" fill="#9a9a9a" />
<rect x="865.50" y="95.50" width="173.00" height="28.00" fill="#fff" stroke="#9a9a9a" stroke-width="1"/>
<text x="867.27" y="114.90" font-size="15.22" font-weight="normal" fill="#222" textLength="51.71" lengthAdjust="spacingAndGlyphs" >General</text>
<path d="M1026.8 108.8 L1033.2 108.8 L1030 111.8 Z" fill="#555"/>
<text x="873.82" y="154.00" font-size="20.29" font-weight="normal" fill="#666" textLength="10.07" lengthAdjust="spacingAndGlyphs" >$</text>
<path d="M897.5 146 L901.25 150.8 L905 146" stroke="#444" stroke-width="1.3" fill="none"/>
<text x="919.36" y="154.70" font-size="19.57" font-weight="normal" fill="#666" textLength="16.26" lengthAdjust="spacingAndGlyphs" >%</text>
<path d="M957.6 143.6 Q960.6 143.6 960.6 146.6 Q960.6 150.5 955.5 152.6 L955 151.6 Q957.6 150.2 957.8 148.8 Q955 148.6 955 146.2 Q955 143.6 957.6 143.6 Z" fill="#666"/>
<rect x="976.50" y="135.00" width="1.00" height="26.70" fill="#d0d0d0" />
<text x="992.94" y="147.00" font-size="10.14" font-weight="normal" fill="#555" textLength="9.87" lengthAdjust="spacingAndGlyphs" >.0</text>
<text x="988.05" y="156.00" font-size="10.14" font-weight="normal" fill="#555" textLength="14.73" lengthAdjust="spacingAndGlyphs" >.00</text>
<path d="M987.5 143.8 L991.5 140.5 V142.8 H995 V144.8 H991.5 V147 Z" fill="#3f7dc2"/>
<text x="1015.90" y="147.00" font-size="10.14" font-weight="normal" fill="#555" textLength="17.03" lengthAdjust="spacingAndGlyphs" >.00</text>
<text x="1022.92" y="156.00" font-size="10.14" font-weight="normal" fill="#555" textLength="9.98" lengthAdjust="spacingAndGlyphs" >.0</text>
<path d="M1026 152.5 L1022 149.2 V151.5 H1018 V153.5 H1022 V155.8 Z" fill="#3f7dc2"/>
<text x="915.71" y="190.80" font-size="13.04" font-weight="normal" fill="#3b3b3b" textLength="48.52" lengthAdjust="spacingAndGlyphs" >Number</text>
<path d="M1034.5 190.5 V181.5 H1043.5" stroke="#222" stroke-width="1.1" fill="none"/>
<path d="M1037 184 L1043 190" stroke="#222" stroke-width="1.1" fill="none"/>
<path d="M1043.8 185.2 V190.8 H1038.2 Z" fill="#222"/>
<rect x="1048.00" y="87.00" width="1.00" height="104.00" fill="#9a9a9a" />
<g stroke="#8a8a8a" stroke-width="1" fill="#fff">
<rect x="1088.5" y="95.5" width="33" height="27"/>
</g>
<rect x="1088.50" y="102.20" width="33.00" height="1.00" fill="#aaa" />
<rect x="1088.50" y="108.90" width="33.00" height="1.00" fill="#aaa" />
<rect x="1088.50" y="115.60" width="33.00" height="1.00" fill="#aaa" />
<rect x="1099.50" y="95.50" width="1.00" height="27.00" fill="#aaa" />
<rect x="1110.50" y="95.50" width="1.00" height="27.00" fill="#aaa" />
<rect x="1099.50" y="96.00" width="7.00" height="6.00" fill="#d9603b" />
<rect x="1099.50" y="103.00" width="10.00" height="5.50" fill="#4a7ebb" />
<rect x="1099.50" y="109.50" width="8.00" height="5.50" fill="#d9603b" />
<rect x="1099.50" y="116.00" width="5.00" height="6.00" fill="#4a7ebb" />
<rect x="1106.5" y="114.5" width="18.5" height="14" fill="#fff" stroke="#6a6a6a" stroke-width="1"/>
<text x="1110.5" y="126.5" font-size="13" fill="#444">≠</text>
<text x="1066.62" y="146.70" font-size="15.51" font-weight="normal" fill="#262626" textLength="78.05" lengthAdjust="spacingAndGlyphs" >Conditional</text>
<text x="1061.26" y="166.60" font-size="15.51" font-weight="normal" fill="#262626" textLength="74.24" lengthAdjust="spacingAndGlyphs" >Formatting</text>
<path d="M1141 159.5 L1144.0 163.5 L1147 159.5" stroke="#444" stroke-width="1.3" fill="none"/>
<rect x="1170.5" y="94.5" width="32" height="28" fill="#fff" stroke="#8a8a8a" stroke-width="1"/>
<rect x="1178.50" y="101.50" width="24.00" height="21.00" fill="#c5d9ef" />
<rect x="1170.50" y="101.20" width="32.00" height="1.00" fill="#aaa" />
<rect x="1170.50" y="108.00" width="32.00" height="1.00" fill="#aaa" />
<rect x="1170.50" y="115.00" width="32.00" height="1.00" fill="#aaa" />
<rect x="1178.50" y="94.50" width="1.00" height="28.00" fill="#aaa" />
<rect x="1186.50" y="94.50" width="1.00" height="28.00" fill="#aaa" />
<rect x="1194.50" y="94.50" width="1.00" height="28.00" fill="#aaa" />
<path d="M1197 115 L1207 103 L1208.5 104.5 L1200 117 Z" fill="#6d6d6d"/>
<path d="M1186 129 Q1190 120 1196 117.5 Q1200 119 1199.5 123 Q1196 128 1186 129 Z" fill="#3f7dc2"/>
<text x="1154.23" y="146.70" font-size="15.51" font-weight="normal" fill="#262626" textLength="66.11" lengthAdjust="spacingAndGlyphs" >Format as</text>
<text x="1163.51" y="166.60" font-size="15.51" font-weight="normal" fill="#262626" textLength="34.55" lengthAdjust="spacingAndGlyphs" >Table</text>
<path d="M1203 159.5 L1206.5 163.5 L1210 159.5" stroke="#444" stroke-width="1.3" fill="none"/>
<rect x="1234.5" y="91.5" width="33" height="29" fill="#fff" stroke="#8a8a8a" stroke-width="1"/>
<rect x="1241.50" y="98.50" width="19.00" height="15.00" fill="#c5d9ef" />
<rect x="1234.50" y="98.00" width="33.00" height="1.00" fill="#aaa" />
<rect x="1234.50" y="113.50" width="33.00" height="1.00" fill="#aaa" />
<rect x="1241.00" y="91.50" width="1.00" height="29.00" fill="#aaa" />
<rect x="1260.50" y="91.50" width="1.00" height="29.00" fill="#aaa" />
<path d="M1259 116 L1271 103 L1272.5 104.5 L1262 118 Z" fill="#6d6d6d"/>
<path d="M1246 129 Q1250 120 1256 117.5 Q1260 119 1259.5 123 Q1256 128 1246 129 Z" fill="#3f7dc2"/>
<text x="1238.25" y="146.70" font-size="15.51" font-weight="normal" fill="#262626" textLength="25.76" lengthAdjust="spacingAndGlyphs" >Cell</text>
<text x="1226.07" y="166.60" font-size="15.51" font-weight="normal" fill="#262626" textLength="38.20" lengthAdjust="spacingAndGlyphs" >Styles</text>
<path d="M1269 159.5 L1272.35 163.5 L1275.7 159.5" stroke="#444" stroke-width="1.3" fill="none"/>
<text x="1152.05" y="190.40" font-size="13.04" font-weight="normal" fill="#3b3b3b" textLength="33.15" lengthAdjust="spacingAndGlyphs" >Styles</text>
<rect x="1290.00" y="87.00" width="1.00" height="104.00" fill="#9a9a9a" />
<rect x="1313.5" y="92.5" width="18" height="6" fill="#fff" stroke="#8a8a8a" stroke-width="1"/>
<rect x="1322.00" y="92.50" width="1.00" height="6.00" fill="#8a8a8a" />
<rect x="1320.5" y="102.5" width="19" height="6" fill="#c5d9ef" stroke="#8a8a8a" stroke-width="1"/>
<rect x="1329.50" y="102.50" width="1.00" height="6.00" fill="#8a8a8a" />
<rect x="1313.5" y="113.5" width="18" height="13" fill="#fff" stroke="#8a8a8a" stroke-width="1"/>
<rect x="1322.00" y="113.50" width="1.00" height="13.00" fill="#8a8a8a" />
<rect x="1313.50" y="119.50" width="18.00" height="1.00" fill="#8a8a8a" />
<path d="M1308 105 L1314 100 V103.5 H1320 V106.5 H1314 V110 Z" fill="#3f7dc2"/>
<text x="1308.18" y="146.70" font-size="15.51" font-weight="normal" fill="#262626" textLength="36.71" lengthAdjust="spacingAndGlyphs" >Insert</text>
<path d="M1323 158.5 L1326.5 162.5 L1330 158.5" stroke="#444" stroke-width="1.3" fill="none"/>
<rect x="1363.5" y="92.5" width="18" height="6" fill="#fff" stroke="#8a8a8a" stroke-width="1"/>
<rect x="1372.00" y="92.50" width="1.00" height="6.00" fill="#8a8a8a" />
<rect x="1370.5" y="102.5" width="13" height="6" fill="#c5d9ef" stroke="#8a8a8a" stroke-width="1"/>
<rect x="1376.50" y="102.50" width="1.00" height="6.00" fill="#8a8a8a" />
<rect x="1363.5" y="112.5" width="18" height="13" fill="#fff" stroke="#8a8a8a" stroke-width="1"/>
<rect x="1372.00" y="112.50" width="1.00" height="13.00" fill="#8a8a8a" />
<rect x="1363.50" y="118.50" width="18.00" height="1.00" fill="#8a8a8a" />
<path d="M1382 98.5 L1397.5 114 M1397.5 99 L1381.5 113" stroke="#d9603b" stroke-width="2.2" fill="none"/>
<text x="1356.76" y="146.70" font-size="15.51" font-weight="normal" fill="#262626" textLength="44.75" lengthAdjust="spacingAndGlyphs" >Delete</text>
<path d="M1375 158.5 L1378.5 162.5 L1382 158.5" stroke="#444" stroke-width="1.3" fill="none"/>
<rect x="1414.5" y="99.5" width="34" height="23" fill="#fff" stroke="#8a8a8a" stroke-width="1"/>
<rect x="1422.50" y="99.50" width="1.00" height="23.00" fill="#8a8a8a" />
<rect x="1431.00" y="99.50" width="1.00" height="23.00" fill="#8a8a8a" />
<rect x="1439.50" y="99.50" width="1.00" height="23.00" fill="#8a8a8a" />
<rect x="1414.50" y="106.67" width="34.00" height="1.00" fill="#8a8a8a" />
<rect x="1414.50" y="114.33" width="34.00" height="1.00" fill="#8a8a8a" />
<rect x="1424.00" y="106.00" width="9.00" height="11.00" fill="#3f7dc2" />
<path d="M1414.5 122.5 V126.5 H1424 L1426 123.5 H1433 L1436 126.5 V122.5" fill="#fff" stroke="#8a8a8a" stroke-width="1"/>
<path d="M1417 94 H1446 M1420 91.5 L1417 94 L1420 96.5 M1443 91.5 L1446 94 L1443 96.5 M1414.5 91 V97 M1449 91 V97" stroke="#3f7dc2" stroke-width="1.2" fill="none"/>
<text x="1407.60" y="146.70" font-size="15.51" font-weight="normal" fill="#262626" textLength="47.51" lengthAdjust="spacingAndGlyphs" >Format</text>
<path d="M1427 158.5 L1430.5 162.5 L1434 158.5" stroke="#444" stroke-width="1.3" fill="none"/>
<text x="1341.39" y="190.40" font-size="13.04" font-weight="normal" fill="#3b3b3b" textLength="27.01" lengthAdjust="spacingAndGlyphs" >Cells</text>
<rect x="1467.00" y="87.00" width="1.00" height="104.00" fill="#9a9a9a" />
<text x="1482.58" y="107.00" font-size="21.74" font-weight="normal" fill="#555" textLength="17.50" lengthAdjust="spacingAndGlyphs" >Σ</text>
<text x="1506.00" y="104.80" font-size="15.51" font-weight="normal" fill="#262626" textLength="61.45" lengthAdjust="spacingAndGlyphs" >AutoSum</text>
<path d="M1588 97.5 L1591.5 101.5 L1595 97.5" stroke="#444" stroke-width="1.3" fill="none"/>
<rect x="1483.5" y="119.5" width="16" height="16.5" fill="#fff" stroke="#777" stroke-width="1"/>
<rect x="1483.50" y="119.00" width="17.00" height="2.00" fill="#777" />
<path d="M1491.5 123 V132 M1488 128.5 L1491.5 132 L1495 128.5" stroke="#3f7dc2" stroke-width="2" fill="none"/>
<text x="1504.68" y="133.50" font-size="15.51" font-weight="normal" fill="#262626" textLength="21.03" lengthAdjust="spacingAndGlyphs" >Fill</text>
<path d="M1530 126.5 L1533.5 130.5 L1537 126.5" stroke="#444" stroke-width="1.3" fill="none"/>
<g transform="rotate(-42 1492 157)"><rect x="1483" y="152.5" width="18" height="9" rx="1.5" fill="#e88aa0"/><rect x="1483" y="152.5" width="6" height="9" rx="1.5" fill="#f3b9c6"/></g>
<text x="1505.27" y="162.80" font-size="15.51" font-weight="normal" fill="#262626" textLength="35.02" lengthAdjust="spacingAndGlyphs" >Clear</text>
<path d="M1545 155.5 L1548.5 159.5 L1552 155.5" stroke="#444" stroke-width="1.3" fill="none"/>
<text x="1616.00" y="107.00" font-size="20.29" font-weight="normal" fill="#3f7dc2" textLength="12.44" lengthAdjust="spacingAndGlyphs" >A</text>
<text x="1615.90" y="124.00" font-size="19.57" font-weight="normal" fill="#8a5ab8" textLength="12.22" lengthAdjust="spacingAndGlyphs" >Z</text>
<path d="M1632 99.5 H1650 L1643 108 V117 H1639 V108 Z" fill="#6d6d6d"/>
<path d="M1640.3 109 V116 H1641.7 V109 Z" fill="#f3f3f3"/>
<text x="1611.29" y="146.70" font-size="15.51" font-weight="normal" fill="#262626" textLength="44.01" lengthAdjust="spacingAndGlyphs" >Sort &amp;</text>
<text x="1608.78" y="166.60" font-size="15.51" font-weight="normal" fill="#262626" textLength="33.88" lengthAdjust="spacingAndGlyphs" >Filter</text>
<path d="M1648 159.5 L1651.5 163.5 L1655 159.5" stroke="#444" stroke-width="1.3" fill="none"/>
<circle cx="1695" cy="104" r="10.8" fill="#fff" stroke="#3f7dc2" stroke-width="2.5"/>
<path d="M1687.5 112.5 L1675.5 124.5" stroke="#3f7dc2" stroke-width="3.6" stroke-linecap="round"/>
<text x="1666.75" y="146.70" font-size="15.51" font-weight="normal" fill="#262626" textLength="45.09" lengthAdjust="spacingAndGlyphs" >Find &amp;</text>
<text x="1662.34" y="166.60" font-size="15.51" font-weight="normal" fill="#262626" textLength="40.80" lengthAdjust="spacingAndGlyphs" >Select</text>
<path d="M1708 159.5 L1711.5 163.5 L1715 159.5" stroke="#444" stroke-width="1.3" fill="none"/>
<text x="1575.91" y="190.40" font-size="13.04" font-weight="normal" fill="#3b3b3b" textLength="41.61" lengthAdjust="spacingAndGlyphs" >Editing</text>
<rect x="1729.00" y="87.00" width="1.00" height="104.00" fill="#9a9a9a" />
<circle cx="1767.8" cy="107.6" r="6.3" fill="#ff8c00"/>
<text x="1743.00" y="146.70" font-size="15.51" font-weight="normal" fill="#262626" textLength="52.55" lengthAdjust="spacingAndGlyphs" >Add-ins</text>
<text x="1745.50" y="190.80" font-size="13.04" font-weight="normal" fill="#3b3b3b" textLength="44.47" lengthAdjust="spacingAndGlyphs" >Add-ins</text>
<rect x="1807.00" y="87.00" width="1.00" height="104.00" fill="#9a9a9a" />
<path d="M1847.5 190.5 L1853 185 L1858.5 190.5" stroke="#444" stroke-width="1.3" fill="none"/>
<path d="M24.9 547.7 V335.7 H1181.7 V547.7 Z" fill="none" stroke="#ec4653" stroke-width="2.6" stroke-dasharray="10.4 4.6" stroke-linecap="butt" stroke-linejoin="round"/>
<path d="M20.2 839 V585.8 H1745 V839 Z" fill="none" stroke="#ec4653" stroke-width="2.6" stroke-dasharray="10.4 4.6" stroke-linecap="butt" stroke-linejoin="round"/>
<rect x="1229.5" y="166.5" width="453" height="103" fill="#ffffff" stroke="#f06a74" stroke-width="1" stroke-dasharray="3 2"/>
<text x="1229.44" y="188.00" font-size="21.30" font-weight="normal" fill="#ff0000" textLength="323.19" lengthAdjust="spacingAndGlyphs" >Data populated by the first query.</text>
<text x="1577" y="190.4" font-size="13" fill="#000" opacity="0.035" textLength="39.6" lengthAdjust="spacingAndGlyphs">Editing</text>
<rect x="1351.5" y="372.5" width="455.5" height="91" fill="#ffffff" stroke="#f06a74" stroke-width="1" stroke-dasharray="3 2"/>
<text x="1351.25" y="393.60" font-size="20.58" font-weight="normal" fill="#ff0000" textLength="355.13" lengthAdjust="spacingAndGlyphs" >Data populated by the second query.</text>
<path d="M1213.4 205 C1150 209 1090 218 1050 248 C1030 263 1015 280 1003 297" fill="none" stroke="#e8414e" stroke-opacity="0.9" stroke-width="2.8" stroke-dasharray="8 4"/>
<path d="M992 309.4 L998.5 291 L1009.3 301.7 Z" fill="#e8141f"/>
<path d="M1413 463 C1340 490 1280 505 1245 532 C1232 542 1224 550 1216 560" fill="none" stroke="#e8414e" stroke-opacity="0.9" stroke-width="2.8" stroke-dasharray="8 4"/>
<path d="M1207 575 L1210.4 555.5 L1222.9 564.4 Z" fill="#e8141f"/>
</svg></body></html>
